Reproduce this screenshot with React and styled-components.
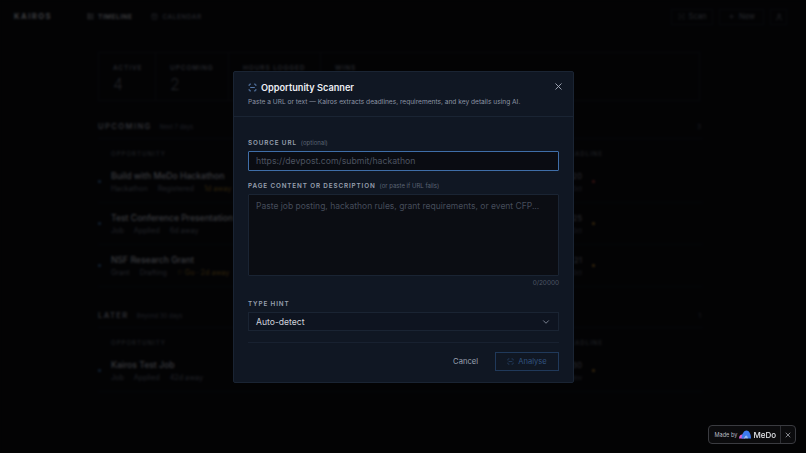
import React from "react";
import styled, { createGlobalStyle } from "styled-components";
import { CalendarDays, ChevronDown, LayoutList, Plus, ScanLine, User, X } from "lucide-react";

const GlobalStyle = createGlobalStyle`
  * { box-sizing: border-box; }
  html, body { margin: 0; height: 100%; background: #0a0b10; }
  body { font-family: Inter, "Open Sans", "Liberation Sans", sans-serif; color: #e6e8ee; overflow: hidden; }
`;

const Page = styled.div`
  width: 806px;
  height: 453px;
  overflow: hidden;
`;

const Nav = styled.header`
  display: flex;
  align-items: center;
  height: 33px;
  padding: 0 19px 0 14px;
`;

const Logo = styled.div`
  width: 73px;
  font-size: 7.6px;
  font-weight: 700;
  letter-spacing: 1.5px;
  color: #c4c6d0;
`;

const NavLink = styled.div`
  display: flex;
  align-items: center;
  gap: 4px;
  margin-right: 19px;
  font-size: 6.5px;
  font-weight: 600;
  letter-spacing: 0.5px;
  color: ${(p) => (p.$active ? "#c4c6d0" : "#6a6e7c")};
`;

const NavRight = styled.div`
  display: flex;
  gap: 6px;
  margin-left: auto;
`;

const NavButton = styled.div`
  display: flex;
  align-items: center;
  justify-content: center;
  gap: 4px;
  width: ${(p) => p.$width}px;
  height: 16px;
  border: 1px solid #1a1c25;
  font-size: 7.5px;
  color: #7f8392;
`;

const Main = styled.main`
  width: 605px;
  margin: 19px 0 0 98px;
`;

const Stats = styled.section`
  display: flex;
  width: 602px;
  height: 49px;
  border: 1px solid #1a1c25;
`;

const Stat = styled.div`
  width: ${(p) => p.$width}px;
  padding: 11px 0 0 14px;
  border-right: 1px solid #1a1c25;
  &:last-child { border-right: 0; }
`;

const StatLabel = styled.div`
  font-size: 6.5px;
  font-weight: 600;
  letter-spacing: 0.9px;
  color: #777b8a;
`;

const StatValue = styled.div`
  margin-top: 2px;
  font-size: 16px;
  font-weight: 200;
  color: #8a8e9c;
`;

const SectionHead = styled.div`
  display: flex;
  align-items: center;
  height: 18px;
  margin-top: ${(p) => p.$top}px;
  padding-bottom: 6px;
  border-bottom: 1px solid #171a22;
`;

const SectionTitle = styled.span`
  font-size: 7.6px;
  font-weight: 600;
  letter-spacing: 1.4px;
  color: #9a9dac;
`;

const SectionNote = styled.span`
  margin-left: 8px;
  font-size: 6px;
  color: #62667a;
`;

const SectionCount = styled.span`
  margin-left: auto;
  margin-right: 2px;
  font-size: 6px;
  color: #62667a;
`;

const TableRow = styled.div`
  display: grid;
  grid-template-columns: 13px 454px 17px 13px 1fr;
  align-items: center;
  height: ${(p) => p.$height}px;
  border-bottom: 1px solid #14161e;
`;

const ColumnHead = styled(TableRow)`
  padding-top: 7px;
  border-bottom: 0;
`;

const ColumnLabel = styled.div`
  grid-column: ${(p) => p.$col};
  font-size: 6px;
  font-weight: 500;
  letter-spacing: 1.05px;
  white-space: nowrap;
  color: #676b79;
`;

const Dot = styled.span`
  width: 3px;
  height: 3px;
  border-radius: 50%;
  background: ${(p) => p.$color};
`;

const MarkDot = styled(Dot)`
  justify-self: end;
`;

const ItemTitle = styled.div`
  font-size: 8.6px;
  line-height: 11px;
  font-weight: 500;
  color: #bcbfca;
`;

const Meta = styled.div`
  display: flex;
  gap: 10px;
  margin-top: 2px;
  font-size: 7.2px;
  line-height: 9px;
  color: #6e7280;
`;

const Away = styled.span`
  color: ${(p) => p.$color || "inherit"};
`;

const DateBox = styled.div`
  text-align: right;
  font-size: 8px;
  line-height: 11px;
  color: #8a8e9c;
  small { display: block; margin-top: 2px; font-size: 6px; line-height: 9px; color: #62667a; }
`;

const Overlay = styled.div`
  position: fixed;
  inset: 0;
  display: flex;
  align-items: flex-start;
  justify-content: center;
  padding-top: 71px;
  background: rgba(0, 0, 0, 0.7);
  backdrop-filter: blur(1px);
`;

const Modal = styled.div`
  width: 341px;
  height: 312px;
  margin-left: 1px;
  background: #101723;
  border: 1px solid #1a2433;
  border-radius: 2px;
`;

const ModalHead = styled.div`
  position: relative;
  height: 45px;
  padding: 10px 14px 0;
  border-bottom: 1px solid #1a2433;
`;

const ModalTitle = styled.div`
  display: flex;
  align-items: center;
  gap: 4px;
  font-size: 9.2px;
  font-weight: 600;
  color: #eceef4;
  svg { color: #6f9bd6; }
`;

const ModalSub = styled.div`
  margin-top: 5px;
  font-size: 6.6px;
  color: #8c94a4;
`;

const CloseButton = styled.div`
  position: absolute;
  top: 9px;
  right: 9px;
  color: #a6acba;
  display: flex;
`;

const ModalBody = styled.div`
  padding: 22px 14px 0;
`;

const Label = styled.div`
  display: flex;
  align-items: baseline;
  gap: 4px;
  margin-top: ${(p) => p.$top || 0}px;
  margin-bottom: 4px;
  font-size: 6.3px;
  line-height: 8px;
  font-weight: 600;
  letter-spacing: 0.88px;
  color: #98a0b0;
`;

const LabelNote = styled.span`
  font-size: 6px;
  font-weight: 400;
  letter-spacing: 0;
  color: #5b6474;
`;

const UrlInput = styled.div`
  display: flex;
  align-items: center;
  height: 20px;
  padding: 0 7px;
  background: #0a0c12;
  border: 1px solid #3f6ea8;
  border-radius: 1px;
  font-size: 8.7px;
  color: #4c5361;
`;

const TextArea = styled.div`
  height: 82px;
  padding: 6px 7px;
  background: #0b0d13;
  border: 1px solid #1a2433;
  border-radius: 1px;
  font-size: 8.5px;
  color: #454c5a;
`;

const Counter = styled.div`
  margin-top: 4px;
  text-align: right;
  font-size: 6.4px;
  line-height: 7px;
  color: #4e5665;
`;

const Select = styled.div`
  display: flex;
  align-items: center;
  justify-content: space-between;
  height: 19px;
  padding: 0 7px;
  background: #0e1420;
  border: 1px solid #1a2433;
  font-size: 8.6px;
  color: #cdd1db;
  svg { color: #8c94a4; }
`;

const Footer = styled.div`
  display: flex;
  align-items: center;
  justify-content: flex-end;
  gap: 17px;
  height: 29px;
  margin-top: 11px;
  padding-top: 9px;
  border-top: 1px solid #182130;
`;

const CancelButton = styled.div`
  font-size: 7.6px;
  color: #9aa2b2;
`;

const AnalyseButton = styled.div`
  display: flex;
  align-items: center;
  justify-content: center;
  gap: 4px;
  width: 64px;
  height: 19px;
  border: 1px solid #20395a;
  font-size: 7.6px;
  color: #30527f;
`;

const Badge = styled.div`
  position: fixed;
  right: 10px;
  bottom: 9px;
  display: flex;
  align-items: center;
  height: 19px;
  background: #0b0b0d;
  border: 1px solid #3a3b40;
  border-radius: 4px;
`;

const BadgeMain = styled.div`
  display: flex;
  align-items: center;
  gap: 2px;
  height: 100%;
  padding: 0 4px 0 5px;
  border-right: 1px solid #2e2f34;
  font-size: 5.6px;
  color: #b8bac2;
`;

const BadgeName = styled.span`
  font-size: 8px;
  font-weight: 500;
  color: #e4e6ea;
`;

const BadgeClose = styled.div`
  display: flex;
  padding: 0 3px;
  color: #c0c2c8;
`;

const upcoming = [
  { title: "Build with MeDo Hackathon", meta: ["Hackathon", "Registered"], away: "1d away", awayColor: "#9a7225", date: "20", month: "Oct", mark: "#b03a36" },
  { title: "Test Conference Presentation", meta: ["Job", "Applied"], away: "6d away", date: "25", month: "Oct", mark: "#b07a28" },
  { title: "NSF Research Grant", meta: ["Grant", "Drafting"], away: "⚐ Go · 2d away", awayColor: "#9a7225", date: "21", month: "Oct", mark: "#b07a28" },
];

const later = [
  { title: "Kairos Test Job", meta: ["Job", "Applied"], away: "42d away", date: "30", month: "Nov", mark: "#b07a28" },
];

const Row = ({ item }) => (
  <TableRow $height={42}>
    <Dot $color="#3f6ea8" />
    <div>
      <ItemTitle>{item.title}</ItemTitle>
      <Meta>
        {item.meta.map((m) => (
          <span key={m}>{m}</span>
        ))}
        <Away $color={item.awayColor}>{item.away}</Away>
      </Meta>
    </div>
    <DateBox>
      {item.date}
      <small>{item.month}</small>
    </DateBox>
    <MarkDot $color={item.mark} />
  </TableRow>
);

const Section = ({ title, note, count, items, top }) => (
  <>
    <SectionHead $top={top}>
      <SectionTitle>{title}</SectionTitle>
      <SectionNote>{note}</SectionNote>
      <SectionCount>{count}</SectionCount>
    </SectionHead>
    <ColumnHead $height={22}>
      <ColumnLabel $col="2">OPPORTUNITY</ColumnLabel>
      <ColumnLabel $col="3">DEADLINE</ColumnLabel>
    </ColumnHead>
    {items.map((item) => (
      <Row key={item.title} item={item} />
    ))}
  </>
);

const MedoMark = () => (
  <svg width="12" height="9" viewBox="0 0 24 18">
    <path d="M0 17 C0 11 4 8 8 9 L12 17 Z" fill="#d95fd0" />
    <path d="M5 17 C6 7 10 1 15 1 C20 1 24 8 24 17 L18 17 C17 13 15 11 13 12 C11 13 10 15 10 17 Z" fill="#3d7bf0" />
    <path d="M10 17 C10 13 13 10 15 11 C17 12 18 14 18 17 Z" fill="#8dbcff" />
  </svg>
);

export default function App() {
  return (
    <Page>
      <GlobalStyle />
      <Nav>
        <Logo>KAIROS</Logo>
        <NavLink $active>
          <LayoutList size={7} /> TIMELINE
        </NavLink>
        <NavLink>
          <CalendarDays size={7} /> CALENDAR
        </NavLink>
        <NavRight>
          <NavButton $width={42}>
            <ScanLine size={7} /> Scan
          </NavButton>
          <NavButton $width={45}>
            <Plus size={7} /> New
          </NavButton>
          <NavButton $width={17}>
            <User size={8} />
          </NavButton>
        </NavRight>
      </Nav>
      <Main>
        <Stats>
          <Stat $width={57}>
            <StatLabel>ACTIVE</StatLabel>
            <StatValue>4</StatValue>
          </Stat>
          <Stat $width={73}>
            <StatLabel>UPCOMING</StatLabel>
            <StatValue>2</StatValue>
          </Stat>
          <Stat $width={92}>
            <StatLabel>HOURS LOGGED</StatLabel>
          </Stat>
          <Stat $width={60}>
            <StatLabel>WINS</StatLabel>
          </Stat>
        </Stats>
        <Section title="UPCOMING" note="Next 7 days" count="3" items={upcoming} top={20} />
        <Section title="LATER" note="Beyond 30 days" count="1" items={later} top={23} />
      </Main>

      <Overlay>
        <Modal>
          <ModalHead>
            <ModalTitle>
              <ScanLine size={9} /> Opportunity Scanner
            </ModalTitle>
            <ModalSub>Paste a URL or text — Kairos extracts deadlines, requirements, and key details using AI.</ModalSub>
            <CloseButton>
              <X size={11} />
            </CloseButton>
          </ModalHead>
          <ModalBody>
            <Label>
              SOURCE URL <LabelNote>(optional)</LabelNote>
            </Label>
            <UrlInput>https://devpost.com/submit/hackathon</UrlInput>
            <Label $top={11}>
              PAGE CONTENT OR DESCRIPTION <LabelNote>(or paste if URL fails)</LabelNote>
            </Label>
            <TextArea>Paste job posting, hackathon rules, grant requirements, or event CFP...</TextArea>
            <Counter>0/20000</Counter>
            <Label $top={13}>TYPE HINT</Label>
            <Select>
              Auto-detect <ChevronDown size={10} />
            </Select>
            <Footer>
              <CancelButton>Cancel</CancelButton>
              <AnalyseButton>
                <ScanLine size={7} /> Analyse
              </AnalyseButton>
            </Footer>
          </ModalBody>
        </Modal>
      </Overlay>

      <Badge>
        <BadgeMain>
          Made by <MedoMark /> <BadgeName>MeDo</BadgeName>
        </BadgeMain>
        <BadgeClose>
          <X size={8} />
        </BadgeClose>
      </Badge>
    </Page>
  );
}
